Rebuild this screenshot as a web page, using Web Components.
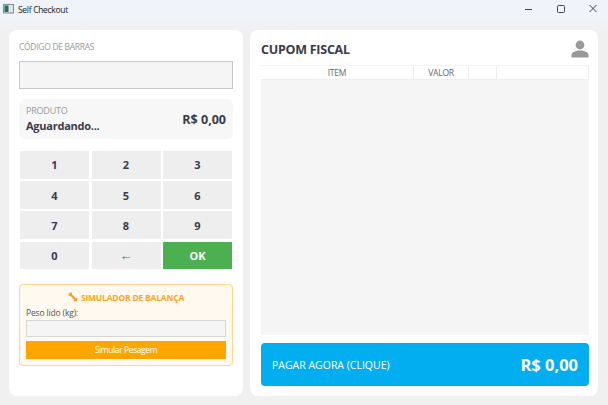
<!DOCTYPE html>
<html>
<head>
<meta charset="utf-8">
<title>Self Checkout</title>
<style>
    html, body { margin: 0; height: 100%; }
    body {
        width: 608px;
        height: 405px;
        overflow: hidden;
        background: #f0f0f0;
        font-family: "Open Sans", "Noto Sans", sans-serif;
        display: flex;
        flex-direction: column;
    }
</style>
</head>
<body>
<title-bar>Self Checkout</title-bar>
<main-view>
    <left-panel slot="left"></left-panel>
    <right-panel slot="right"></right-panel>
</main-view>
<script>
class TitleBar extends HTMLElement {
    constructor() {
        super()
        this.attachShadow({ mode: "open" })
        this.shadowRoot.innerHTML = `
        <style>
            :host {
                display: flex;
                align-items: center;
                flex: none;
                height: 18px;
                background: #f0f3f9;
                color: #1c1c1c;
                font-size: 8.5px;
                letter-spacing: -0.3px;
            }
            .icon { margin-left: 3px; margin-right: 4px; display: block; }
            .title { flex: 1; }
            .btn { box-sizing: border-box; width: 32px; height: 18px; padding-left: 13px; display: flex; align-items: center; }
            .btn svg { display: block; }
        </style>
        <svg class="icon" width="11" height="10" viewBox="0 0 11 10">
            <rect x="0.5" y="0.5" width="10" height="8.5" fill="#dfe5e8" stroke="#7d8a90"/>
            <rect x="1.5" y="1.5" width="4" height="6.5" fill="#1f6f63"/>
        </svg>
        <span class="title"><slot></slot></span>
        <span class="btn"><svg width="10" height="10" viewBox="0 0 10 10"><path d="M0 5.5H7" stroke="#444" fill="none"/></svg></span>
        <span class="btn"><svg width="10" height="10" viewBox="0 0 10 10"><rect x="0.5" y="1.5" width="7" height="7" rx="1" stroke="#444" fill="none"/></svg></span>
        <span class="btn"><svg width="10" height="10" viewBox="0 0 10 10"><path d="M0.5 1L7.5 8M7.5 1L0.5 8" stroke="#444" fill="none"/></svg></span>
        `
    }
}

class MainView extends HTMLElement {
    constructor() {
        super()
        this.attachShadow({ mode: "open" })
        this.shadowRoot.innerHTML = `
        <style>
            :host {
                flex: 1;
                display: grid;
                grid-template-columns: 234px 348px;
                gap: 7px;
                padding: 12px 10px 9px 9px;
                background: linear-gradient(#f0f3f9, #f0f0f0 12px);
                min-height: 0;
            }
        </style>
        <slot name="left"></slot>
        <slot name="right"></slot>
        `
    }
}

class ProductBox extends HTMLElement {
    constructor() {
        super()
        this.attachShadow({ mode: "open" })
        this.shadowRoot.innerHTML = `
        <style>
            :host {
                display: flex;
                align-items: center;
                justify-content: space-between;
                height: 40px;
                padding: 0 7px;
                background: #f7f7f7;
                border-radius: 6px;
                color: #3a3a4a;
            }
            .label { font-size: 9px; line-height: 12.5px; color: #999; letter-spacing: -0.2px; }
            .name { font-size: 11px; line-height: 15px; font-weight: 700; letter-spacing: -0.25px; }
            .price { font-size: 12.5px; font-weight: 700; }
        </style>
        <div>
            <div class="label">PRODUTO</div>
            <div class="name">Aguardando...</div>
        </div>
        <div class="price">R$ 0,00</div>
        `
    }
}

class KeyPad extends HTMLElement {
    constructor() {
        super()
        this.attachShadow({ mode: "open" })
        const keys = ["1", "2", "3", "4", "5", "6", "7", "8", "9", "0", "←", "OK"]
        this.shadowRoot.innerHTML = `
        <style>
            :host {
                display: grid;
                grid-template-columns: 69px 69px 69px;
                grid-auto-rows: 27.7px;
                gap: 2.5px;
                margin: 12px 1px 0;
            }
            div {
                display: flex;
                align-items: center;
                justify-content: center;
                background: #eeeeee;
                color: #3a3a4a;
                font-size: 11px;
                font-weight: 700;
            }
            .back { color: #666; font-weight: 400; font-size: 13px; }
            .ok { background: #4caf50; color: #fff; }
        </style>
        ${keys.map(k => `<div class="${k == "OK" ? "ok" : k == "←" ? "back" : ""}">${k}</div>`).join("")}
        `
    }
}

class ScaleSim extends HTMLElement {
    constructor() {
        super()
        this.attachShadow({ mode: "open" })
        this.shadowRoot.innerHTML = `
        <style>
            :host {
                display: block;
                box-sizing: border-box;
                height: 82.3px;
                margin-top: 14.7px;
                padding: 0 6px;
                background: #fff9ef;
                border: 1px solid #ffd78f;
                border-radius: 4px;
            }
            .head {
                display: flex;
                align-items: center;
                justify-content: center;
                gap: 3px;
                box-sizing: border-box;
                height: 24px;
                padding-top: 1px;
                color: #ffa51e;
                font-size: 8.5px;
                font-weight: 700;
                letter-spacing: -0.2px;
            }
            .label { height: 11px; line-height: 11px; font-size: 8.5px; color: #555; margin-top: -2px; letter-spacing: -0.15px; }
            .field {
                box-sizing: border-box;
                height: 17px;
                margin-top: 2.3px;
                background: #f5f5f5;
                border: 1px solid #d6d6d6;
            }
            .btn {
                height: 18px;
                margin-top: 3.4px;
                display: flex;
                align-items: center;
                justify-content: center;
                background: #ffa500;
                color: #fff;
                font-size: 8.5px;
                letter-spacing: -0.4px;
            }
        </style>
        <div class="head">
            <svg width="10" height="10" viewBox="0 0 10 10">
                <path d="M2 2L8 8" stroke="#f5a623" stroke-width="2.4" stroke-linecap="round" fill="none"/>
                <circle cx="1.8" cy="3" r="1.2" fill="#f5a623"/><circle cx="3" cy="1.8" r="1.2" fill="#f5a623"/>
                <circle cx="7" cy="8.2" r="1.2" fill="#f5a623"/><circle cx="8.2" cy="7" r="1.2" fill="#f5a623"/>
            </svg>
            <span>SIMULADOR DE BALANÇA</span>
        </div>
        <div class="label">Peso lido (kg):</div>
        <div class="field"></div>
        <div class="btn">Simular Pesagem</div>
        `
    }
}

class LeftPanel extends HTMLElement {
    constructor() {
        super()
        this.attachShadow({ mode: "open" })
        this.shadowRoot.innerHTML = `
        <style>
            :host {
                display: block;
                box-sizing: border-box;
                padding: 10px 10px 0;
                background: #fff;
                border-radius: 8px;
            }
            .label { height: 16px; line-height: 14px; font-size: 8.5px; color: #999; letter-spacing: -0.3px; }
            .field {
                box-sizing: border-box;
                height: 28px;
                margin-top: 5px;
                margin-bottom: 10px;
                background: #f5f5f5;
                border: 1px solid #c8c8c8;
            }
        </style>
        <div class="label">CÓDIGO DE BARRAS</div>
        <div class="field"></div>
        <product-box></product-box>
        <key-pad></key-pad>
        <scale-sim></scale-sim>
        `
    }
}

class ReceiptTable extends HTMLElement {
    constructor() {
        super()
        this.attachShadow({ mode: "open" })
        this.shadowRoot.innerHTML = `
        <style>
            :host {
                display: flex;
                flex-direction: column;
                flex: 1;
                min-height: 0;
                background: #f5f5f5;
            }
            .head {
                display: grid;
                grid-template-columns: 153px 55px 28px 1fr;
                height: 13px;
                background: #fff;
                border-bottom: 1px solid #eeeeee;
                border-top: 1px solid #f4f4f4;
                font-size: 8.5px;
                letter-spacing: -0.2px;
                line-height: 13px;
                color: #666;
                text-align: center;
            }
            .head div { border-right: 1px solid #eeeeee; }
        </style>
        <div class="head">
            <div>ITEM</div><div>VALOR</div><div></div><div></div>
        </div>
        `
    }
}

class PayButton extends HTMLElement {
    constructor() {
        super()
        this.attachShadow({ mode: "open" })
        this.shadowRoot.innerHTML = `
        <style>
            :host {
                display: flex;
                align-items: center;
                justify-content: space-between;
                flex: none;
                height: 43px;
                margin-top: 8px;
                padding: 0 10.5px 0 11px;
                background: #03aef0;
                border-radius: 4px;
                color: #fff;
            }
            .text { font-size: 10.5px; }
            .total { font-size: 16.5px; font-weight: 700; }
        </style>
        <span class="text">PAGAR AGORA (CLIQUE)</span>
        <span class="total">R$ 0,00</span>
        `
    }
}

class RightPanel extends HTMLElement {
    constructor() {
        super()
        this.attachShadow({ mode: "open" })
        this.shadowRoot.innerHTML = `
        <style>
            :host {
                display: flex;
                flex-direction: column;
                box-sizing: border-box;
                padding: 0 9.5px 10px 11px;
                background: #fff;
                border-radius: 8px;
                min-height: 0;
            }
            .top {
                display: flex;
                align-items: center;
                justify-content: space-between;
                flex: none;
                height: 35px;
            }
            h1 { margin: 4px 0 0; font-size: 12.5px; font-weight: 700; color: #3a3a4a; letter-spacing: -0.25px; }
            svg { display: block; margin-top: 3px; }
        </style>
        <div class="top">
            <h1>CUPOM FISCAL</h1>
            <svg width="18" height="18" viewBox="0 0 18 18">
                <circle cx="9" cy="5" r="4.4" fill="#999"/>
                <path d="M0.5 17.5V15C0.5 12 5 10.5 9 10.5S17.5 12 17.5 15V17.5Z" fill="#999"/>
            </svg>
        </div>
        <receipt-table></receipt-table>
        <pay-button></pay-button>
        `
    }
}

customElements.define('title-bar', TitleBar)
customElements.define('main-view', MainView)
customElements.define('product-box', ProductBox)
customElements.define('key-pad', KeyPad)
customElements.define('scale-sim', ScaleSim)
customElements.define('left-panel', LeftPanel)
customElements.define('receipt-table', ReceiptTable)
customElements.define('pay-button', PayButton)
customElements.define('right-panel', RightPanel)
</script>
</body>
</html>
